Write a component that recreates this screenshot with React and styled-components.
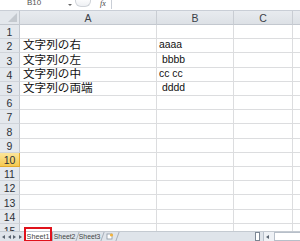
import React from "react";
import styled, { createGlobalStyle } from "styled-components";

const Global = createGlobalStyle`
  html, body { margin: 0; padding: 0; background: #fff; overflow: hidden; }
  #root { width: 300px; height: 241px; }
`;

const Window = styled.div`
  width: 300px;
  height: 241px;
  display: flex;
  flex-direction: column;
  overflow: hidden;
  font-family: "Liberation Sans", Arial, sans-serif;
  background: #fff;
`;

const FormulaBar = styled.div`
  height: 10px;
  flex: none;
  display: flex;
  align-items: flex-start;
  background: #fff;
  border-bottom: 1px solid #c9ced6;
  overflow: hidden;
`;

const NameBox = styled.div`
  width: 66px;
  padding-left: 27px;
  box-sizing: border-box;
  font-size: 8px;
  line-height: 8px;
  color: #555;
  margin-top: -1px;
`;

const DropArrow = styled.div`
  width: 0;
  height: 0;
  margin: 4px 3px 0 2px;
  border-left: 2px solid transparent;
  border-right: 2px solid transparent;
  border-top: 2px solid #666;
`;

const Pill = styled.div`
  width: 16px;
  height: 9px;
  margin-top: -2px;
  border: 1px solid #cfd3d8;
  border-top: none;
  border-radius: 0 0 6px 6px;
  background: linear-gradient(#fff, #eef0f3);
  box-sizing: border-box;
`;

const Fx = styled.div`
  margin: 0 0 0 9px;
  width: 8px;
  font-family: "Liberation Serif", serif;
  font-style: italic;
  font-size: 8px;
  line-height: 8px;
  color: #444;
`;

const Input = styled.div`
  flex: 1;
  height: 9px;
  margin-left: 3px;
  border-left: 1px solid #c9ced6;
  background: #fff;
`;

const Sheet = styled.div`
  flex: 1;
  min-height: 0;
  overflow: hidden;
  display: flex;
  flex-direction: column;
`;

const Row = styled.div`
  display: flex;
  flex: none;
  height: ${(p) => p.$h}px;
`;

const Corner = styled.div`
  width: 20px;
  flex: none;
  box-sizing: border-box;
  background: #e3e7ec;
  border-right: 1px solid #c3c8cf;
  border-bottom: 1px solid #c3c8cf;
  position: relative;
  &::after {
    content: "";
    position: absolute;
    right: 2px;
    bottom: 2px;
    width: 0;
    height: 0;
    border-left: 9px solid transparent;
    border-bottom: 9px solid #c4c9cf;
  }
`;

const ColHead = styled.div`
  width: ${(p) => p.$w}px;
  flex: none;
  box-sizing: border-box;
  background: linear-gradient(#e8ebef, #dde1e6);
  border-right: 1px solid #c9cdd3;
  border-bottom: 1px solid #c3c8cf;
  display: flex;
  align-items: center;
  justify-content: center;
  font-size: 10.5px;
  color: #3a3f47;
  padding-top: 1px;
`;

const RowHead = styled.div`
  width: 20px;
  flex: none;
  box-sizing: border-box;
  background: ${(p) =>
    p.$active ? "linear-gradient(#fbe59b, #f5c94f)" : "#e4e8ed"};
  border-right: 1px solid ${(p) => (p.$active ? "#e2a92b" : "#c3c8cf")};
  border-bottom: 1px solid ${(p) => (p.$active ? "#e2a92b" : "#d0d4da")};
  display: flex;
  align-items: center;
  justify-content: center;
  font-size: 10.5px;
  color: #2c3138;
  padding-top: 1px;
`;

const Cell = styled.div`
  width: ${(p) => p.$w}px;
  flex: none;
  box-sizing: border-box;
  border-right: 1px solid #dcdddf;
  border-bottom: 1px solid #dcdddf;
  display: flex;
  align-items: flex-end;
  padding-left: ${(p) => p.$pl || 3}px;
  padding-bottom: 1px;
  white-space: pre;
  color: #111;
  font-family: "Liberation Sans", "Noto Sans CJK JP", sans-serif;
  font-size: ${(p) => (p.$jp ? 11.6 : 10.4)}px;
  line-height: 12px;
`;

const TabBar = styled.div`
  height: 10px;
  flex: none;
  display: flex;
  align-items: stretch;
  background: #dfe4ea;
  border-top: 1px solid #c4cad1;
  box-sizing: border-box;
`;

const Nav = styled.div`
  width: 24px;
  flex: none;
  display: flex;
  align-items: center;
  justify-content: space-around;
  padding: 0 1px;
  box-sizing: border-box;
`;

const Tri = styled.div`
  width: 0;
  height: 0;
  margin-left: ${(p) => p.$ml || 0}px;
  border-top: 2px solid transparent;
  border-bottom: 2px solid transparent;
  ${(p) =>
    p.$dir === "l"
      ? "border-right: 3px solid #5a6470;"
      : "border-left: 3px solid #5a6470;"}
`;

const Tab = styled.div`
  position: relative;
  flex: none;
  width: ${(p) => p.$w}px;
  display: flex;
  align-items: center;
  justify-content: center;
  font-size: 6.8px;
  line-height: 8px;
  color: #444;
  background: ${(p) => (p.$active ? "#fff" : "transparent")};
  border-right: 1px solid #a8b0ba;
  transform: skewX(-20deg);
  & > span { transform: skewX(20deg); }
`;

const ActiveTab = styled(Tab)`
  transform: none;
  font-size: 7.2px;
  & > span { transform: none; }
  &::after {
    content: "";
    position: absolute;
    left: 0;
    right: 0;
    top: -5px;
    bottom: -1px;
    border: 2px solid #e0121b;
  }
`;

const NewSheet = styled.div`
  width: 14px;
  flex: none;
  display: flex;
  align-items: center;
  justify-content: center;
  border-right: 1px solid #a8b0ba;
  transform: skewX(-20deg);
  & > svg { transform: skewX(20deg); }
`;

const Spacer = styled.div`
  flex: 1;
`;

const Splitter = styled.div`
  width: 3px;
  height: 7px;
  align-self: center;
  border: 1px solid #7c8794;
  background: #fff;
  margin-right: 3px;
`;

const ScrollTrack = styled.div`
  width: 36px;
  flex: none;
  display: flex;
  align-items: center;
  background: #eef1f5;
  border-left: 1px solid #b9c1cb;
`;

const Track = styled.div`
  flex: 1;
  height: 7px;
  margin-left: 5px;
  background: #fff;
  border: 1px solid #b7bfc9;
  border-right: none;
`;

const cols = [
  { key: "A", w: 137 },
  { key: "B", w: 77 },
  { key: "C", w: 59 },
  { key: "D", w: 40 },
];

const data = {
  2: ["文字列の右", "aaaa", 2],
  3: ["文字列の左", " bbbb", 2],
  4: ["文字列の中", "cc cc", 2],
  5: ["文字列の両端", " dddd", 2],
};

const heights = Array.from({ length: 16 }, (_, i) =>
  Math.round(25 + 14.2 * (i + 1)) - Math.round(25 + 14.2 * i)
);

export default function App() {
  return (
    <Window>
      <Global />
      <FormulaBar>
        <NameBox>B10</NameBox>
        <DropArrow />
        <Pill />
        <Fx>fx</Fx>
        <Input />
      </FormulaBar>
      <Sheet>
        <Row $h={14}>
          <Corner />
          {cols.map((c) => (
            <ColHead key={c.key} $w={c.w}>
              {c.key}
            </ColHead>
          ))}
        </Row>
        {heights.map((h, i) => {
          const n = i + 1;
          const d = data[n];
          return (
            <Row key={n} $h={h}>
              <RowHead $active={n === 10}>{n}</RowHead>
              <Cell $w={137} $jp>{d ? d[0] : ""}</Cell>
              <Cell $w={77} $pl={d ? d[2] : 3}>{d ? d[1] : ""}</Cell>
              <Cell $w={59} />
              <Cell $w={40} />
            </Row>
          );
        })}
      </Sheet>
      <TabBar>
        <Nav>
          <Tri $dir="l" />
          <Tri $dir="l" />
          <Tri $dir="r" />
          <Tri $dir="r" />
        </Nav>
        <ActiveTab $w={28} $active>
          <span>Sheet1</span>
        </ActiveTab>
        <Tab $w={24}>
          <span>Sheet2</span>
        </Tab>
        <Tab $w={24}>
          <span>Sheet3</span>
        </Tab>
        <NewSheet>
          <svg width="8" height="7" viewBox="0 0 8 7">
            <rect x="1" y="1" width="5" height="5" fill="#fff" stroke="#8a96a4" strokeWidth="0.8" />
            <circle cx="5.5" cy="2" r="1.6" fill="#f2b33d" />
          </svg>
        </NewSheet>
        <Spacer />
        <Splitter />
        <ScrollTrack>
          <Tri $dir="l" $ml={2} />
          <Track />
        </ScrollTrack>
      </TabBar>
    </Window>
  );
}
